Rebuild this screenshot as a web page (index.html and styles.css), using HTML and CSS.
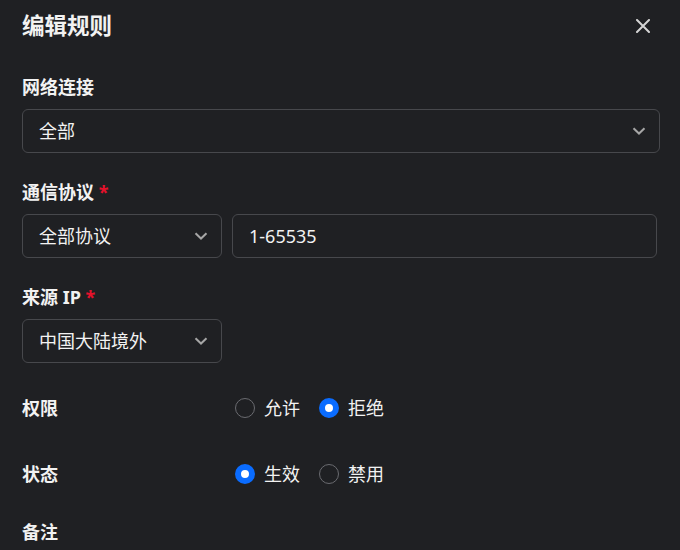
FILE: index.html
```html
<!DOCTYPE html>
<html>
<head>
    <meta charset="utf-8">
    <title>编辑规则</title>
    <link rel="stylesheet" href="styles.css">
</head>
<body>
    <div class="dialog">
        <div class="dialog-header">
            <h2 class="dialog-title">编辑规则</h2>
            <button class="close-btn" aria-label="关闭">
                <svg width="14" height="14" viewBox="0 0 14 14">
                    <path d="M1 1L13 13M13 1L1 13" stroke="currentColor" stroke-width="2" stroke-linecap="round"/>
                </svg>
            </button>
        </div>

        <div class="form-item">
            <label class="form-label">网络连接</label>
            <div class="select full">
                <span>全部</span>
                <svg class="chevron" width="14" height="8" viewBox="0 0 14 8">
                    <path d="M1.5 1.2L7 6.5L12.5 1.2" fill="none" stroke="currentColor" stroke-width="2"/>
                </svg>
            </div>
        </div>

        <div class="form-item">
            <label class="form-label">通信协议 <span class="required">*</span></label>
            <div class="form-row">
                <div class="select short">
                    <span>全部协议</span>
                    <svg class="chevron" width="14" height="8" viewBox="0 0 14 8">
                        <path d="M1.5 1.2L7 6.5L12.5 1.2" fill="none" stroke="currentColor" stroke-width="2"/>
                    </svg>
                </div>
                <input class="text-input" type="text" value="1-65535">
            </div>
        </div>

        <div class="form-item">
            <label class="form-label">来源 IP <span class="required">*</span></label>
            <div class="select short">
                <span>中国大陆境外</span>
                <svg class="chevron" width="14" height="8" viewBox="0 0 14 8">
                    <path d="M1.5 1.2L7 6.5L12.5 1.2" fill="none" stroke="currentColor" stroke-width="2"/>
                </svg>
            </div>
        </div>

        <div class="form-item inline">
            <label class="form-label">权限</label>
            <div class="radio-group">
                <label class="radio"><span class="radio-dot"></span>允许</label>
                <label class="radio checked"><span class="radio-dot"></span>拒绝</label>
            </div>
        </div>

        <div class="form-item inline">
            <label class="form-label">状态</label>
            <div class="radio-group">
                <label class="radio checked"><span class="radio-dot"></span>生效</label>
                <label class="radio"><span class="radio-dot"></span>禁用</label>
            </div>
        </div>

        <div class="form-item">
            <label class="form-label">备注</label>
        </div>
    </div>
</body>
</html>
```

FILE: styles.css
```css
body {
    margin: 0;
    padding: 0;
    background-color: #1f2023;
    color: #f2f2f2;
    font-family: "Noto Sans", "Noto Sans CJK SC", sans-serif;
    font-size: 18px;
    overflow: hidden;
}

.dialog {
    padding: 0 20px 0 22px;
}

.dialog-header {
    display: flex;
    justify-content: space-between;
    align-items: center;
    height: 52px;
}

.dialog-title {
    margin: 0;
    font-size: 22.5px;
    font-weight: bold;
    line-height: 24px;
}

.close-btn {
    background: none;
    border: none;
    padding: 0;
    margin-right: 10px;
    color: #d4d4d4;
    display: flex;
    cursor: pointer;
}

.form-item {
    margin-top: 27px;
}

.dialog-header + .form-item {
    margin-top: 23px;
}

.form-label {
    display: block;
    font-size: 18px;
    font-weight: bold;
    line-height: 24px;
    margin-bottom: 10px;
}

.required {
    color: #e5112b;
}

.select {
    box-sizing: border-box;
    display: flex;
    align-items: center;
    justify-content: space-between;
    height: 44px;
    padding: 0 13px 0 16px;
    border: 1px solid #47484c;
    border-radius: 6px;
    line-height: 24px;
}

.select.short {
    width: 200px;
    flex-shrink: 0;
}

.chevron {
    color: #a6a6a6;
}

.form-row {
    display: flex;
    gap: 10px;
    margin-right: 3px;
}

.text-input {
    box-sizing: border-box;
    flex: 1;
    height: 44px;
    padding: 0 16px;
    border: 1px solid #47484c;
    border-radius: 6px;
    background: transparent;
    color: #f2f2f2;
    font-family: inherit;
    font-size: 18px;
    outline: none;
}

.form-item.inline {
    display: flex;
    align-items: center;
    min-height: 40px;
    margin-top: 25px;
}

.form-item.inline + .form-item.inline {
    margin-top: 26px;
}

.form-item.inline + .form-item {
    margin-top: 26px;
}

.form-item.inline .form-label {
    width: 213px;
    margin-bottom: 0;
}

.radio-group {
    display: flex;
    gap: 19px;
}

.radio {
    display: flex;
    align-items: center;
    gap: 9px;
    line-height: 24px;
}

.radio-dot {
    box-sizing: border-box;
    width: 20px;
    height: 20px;
    border: 1px solid #6a6b70;
    border-radius: 50%;
}

.radio.checked .radio-dot {
    border: 6.5px solid #0a6cff;
    background-color: #fff;
}
```
